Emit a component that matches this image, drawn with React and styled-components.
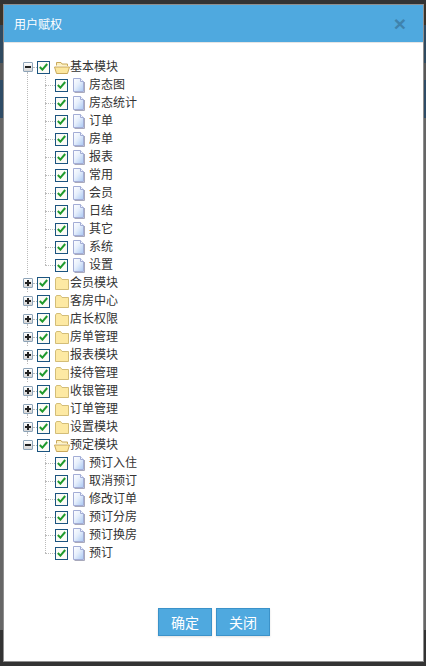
import React from "react";
import styled, { createGlobalStyle } from "styled-components";

const GlobalStyle = createGlobalStyle`
html, body {
  margin: 0;
  padding: 0;
  background: #333333;
}
* { box-sizing: border-box; }
`;

const treeData = [
  { name: "基本模块", open: true, children: ["房态图", "房态统计", "订单", "房单", "报表", "常用", "会员", "日结", "其它", "系统", "设置"] },
  { name: "会员模块" },
  { name: "客房中心" },
  { name: "店长权限" },
  { name: "房单管理" },
  { name: "报表模块" },
  { name: "接待管理" },
  { name: "收银管理" },
  { name: "订单管理" },
  { name: "设置模块" },
  { name: "预定模块", open: true, children: ["预订入住", "取消预订", "修改订单", "预订分房", "预订换房", "预订"] },
];

function CheckIcon() {
  return (
    <svg width="9" height="8" viewBox="0 0 9 8">
      <path d="M0.8 4 L3.4 6.6 L8.2 1" fill="none" stroke="#1f9a2c" strokeWidth="2" />
    </svg>
  );
}

function FolderIcon({ open }) {
  if (open) {
    return (
      <svg width="16" height="13" viewBox="0 0 16 13">
        <path d="M2.5 4.5 V1.5 H7 L8 3 H13.5 V5" fill="#fdf0bd" stroke="#c9a95c" />
        <path d="M0.5 6 H15.5 L13.5 12.5 H2.5 Z" fill="#fce79f" stroke="#c9a95c" />
      </svg>
    );
  }
  return (
    <svg width="14" height="13" viewBox="0 0 14 13">
      <path d="M0.5 2 L1.5 0.5 H5.5 L7 2.5 H13.5 V12.5 H0.5 Z" fill="#fde9a3" stroke="#d3bd78" />
    </svg>
  );
}

function PageIcon() {
  return (
    <svg width="12" height="15" viewBox="0 0 12 15">
      <defs>
        <linearGradient id="pageFill" x1="0" y1="0" x2="1" y2="1">
          <stop offset="0" stopColor="#ffffff" />
          <stop offset="0.45" stopColor="#e6effc" />
          <stop offset="1" stopColor="#a9c8f2" />
        </linearGradient>
      </defs>
      <path d="M0.5 0.5 H7.5 L10.5 3.5 V13.5 H0.5 Z" fill="url(#pageFill)" stroke="#a3add6" />
      <path d="M7.5 0.5 V3.5 H10.5" fill="#f2f6fd" stroke="#a3add6" />
      <path d="M11.5 4 V14.5 H1.5" fill="none" stroke="#a8a9bb" />
    </svg>
  );
}

function TreeNode({ node, last }) {
  return (
    <NodeItem $last={last}>
      <RootRow>
        <Switch $open={node.open} />
        <CheckBox><CheckIcon /></CheckBox>
        <FolderSlot $open={node.open}><FolderIcon open={node.open} /></FolderSlot>
        <Label>{node.name}</Label>
      </RootRow>
      {node.children && (
        <ChildList>
          {node.children.map((child) => (
            <ChildRow key={child}>
              <CheckBox><CheckIcon /></CheckBox>
              <PageSlot><PageIcon /></PageSlot>
              <Label>{child}</Label>
            </ChildRow>
          ))}
        </ChildList>
      )}
    </NodeItem>
  );
}

export default function App() {
  return (
    <Page>
      <GlobalStyle />
      <Modal>
        <Header>
          <Title>用户赋权</Title>
          <CloseMark>×</CloseMark>
        </Header>
        <Body>
          <Tree>
            {treeData.map((node, i) => (
              <TreeNode key={node.name} node={node} last={i === treeData.length - 1} />
            ))}
          </Tree>
          <Footer>
            <ActionButton>确定</ActionButton>
            <ActionButton>关闭</ActionButton>
          </Footer>
        </Body>
      </Modal>
    </Page>
  );
}

/* the dimmed page behind the dialog only shows as a thin strip down the sides */
const Page = styled.div`
width: 426px;
height: 666px;
padding: 4px 2px 4px 3px;
background: linear-gradient(
  #333333 4px,
  #3a3329 4px 25px,
  #2f4a60 25px 63px,
  #585858 63px 80px,
  #2f4c66 80px 118px,
  #666666 118px 630px,
  #333333 630px
);
overflow: hidden;
font-family: "Liberation Sans", "Noto Sans CJK SC", sans-serif;
`;

const Modal = styled.div`
display: flex;
flex-direction: column;
height: 658px;
background: #ffffff;
border: 1px solid #8f8f8f;
`;

const Header = styled.div`
display: flex;
align-items: center;
justify-content: space-between;
height: 38px;
padding: 0 17px 0 10px;
background: #4fa9df;
border-bottom: 1px solid #e5e5e5;
flex-shrink: 0;
`;

const Title = styled.div`
color: #ffffff;
font-size: 12px;
`;

const CloseMark = styled.div`
color: #3f83ad;
font-family: "Liberation Sans", sans-serif;
font-size: 21px;
font-weight: 700;
line-height: 1;
`;

const Body = styled.div`
display: flex;
flex-direction: column;
flex: 1;
`;

const Tree = styled.ul`
list-style: none;
margin: 0;
padding: 15px 0 0 19px;
flex: 1;
`;

const NodeItem = styled.li`
position: relative;

&::before {
  content: "";
  position: absolute;
  left: 4px;
  top: 14px;
  bottom: 0;
  border-left: 1px dotted ${({ $last }) => ($last ? "transparent" : "#bbbbbb")};
}
`;

const RootRow = styled.div`
position: relative;
display: flex;
align-items: center;
height: 18px;

&::before {
  content: "";
  position: absolute;
  left: 10px;
  top: 9px;
  width: 4px;
  border-top: 1px dotted #bbbbbb;
}
`;

const Switch = styled.span`
position: relative;
width: 10px;
height: 10px;
margin-right: 4px;
border: 1px solid #8ea4b8;
border-radius: 1px;
background: linear-gradient(#ffffff, #d5d5d5);
flex-shrink: 0;

&::before {
  content: "";
  position: absolute;
  left: 1px;
  top: 3px;
  width: 6px;
  height: 1px;
  background: #222222;
  box-shadow: 0 1px 0 #222222;
}

&::after {
  content: "";
  display: ${({ $open }) => ($open ? "none" : "block")};
  position: absolute;
  left: 3px;
  top: 1px;
  width: 2px;
  height: 6px;
  background: #222222;
}
`;

const CheckBox = styled.span`
display: flex;
align-items: center;
justify-content: center;
width: 13px;
height: 13px;
border: 1px solid #1b5480;
background: #fbfbf6;
flex-shrink: 0;
`;

const FolderSlot = styled.span`
display: flex;
width: 16px;
margin-left: ${({ $open }) => ($open ? "4px" : "5px")};
margin-right: ${({ $open }) => ($open ? "0" : "-1px")};
flex-shrink: 0;
`;

const PageSlot = styled.span`
display: flex;
margin: 1px 4px 0 5px;
flex-shrink: 0;
`;

const Label = styled.span`
color: #333333;
font-size: 12px;
line-height: 18px;
white-space: nowrap;
`;

const ChildList = styled.ul`
position: relative;
list-style: none;
margin: 0;
padding: 0 0 0 32px;

&::before {
  content: "";
  position: absolute;
  left: 22px;
  top: 0;
  bottom: 9px;
  border-left: 1px dotted #bbbbbb;
}
`;

const ChildRow = styled.li`
position: relative;
display: flex;
align-items: center;
height: 18px;

&::before {
  content: "";
  position: absolute;
  left: -10px;
  top: 9px;
  width: 10px;
  border-top: 1px dotted #bbbbbb;
}
`;

const Footer = styled.div`
display: flex;
justify-content: center;
gap: 4px;
padding: 0 0 25px 1px;
`;

const ActionButton = styled.button`
width: 54px;
height: 28px;
padding: 0;
color: #ffffff;
font-family: inherit;
font-size: 14px;
background: #4fa9df;
border: 1px solid #3b92c9;
box-shadow: 0 1px 2px rgba(0, 0, 0, 0.12);
`;
